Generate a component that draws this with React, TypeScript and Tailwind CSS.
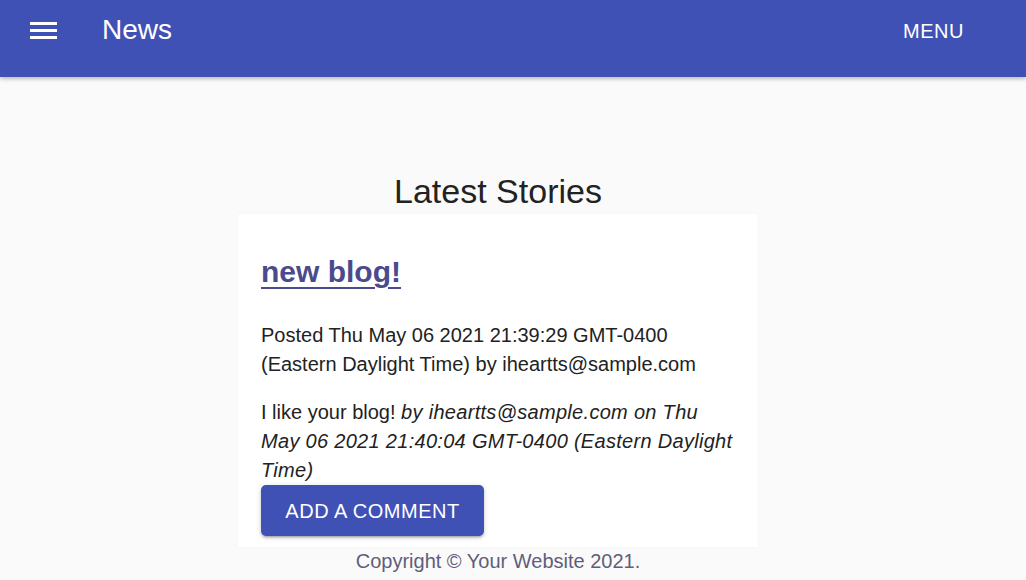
export default function App() {
  return (
    <div className="min-h-[580px] bg-[#fafafa] font-['Liberation_Sans',Arial,sans-serif] text-[#222]">
      {/* app bar */}
      <header className="relative z-10 flex h-[77px] items-start bg-[#3f51b5] pl-[30px] pr-[62px] text-white shadow-[0_2px_4px_rgba(0,0,0,0.25)]">
        <svg className="mt-[22px]" width="27" height="17" viewBox="0 0 27 17" fill="white">
          <rect x="0" y="0" width="27" height="3" />
          <rect x="0" y="7" width="27" height="3" />
          <rect x="0" y="14" width="27" height="3" />
        </svg>
        <h1 className="ml-[45px] mt-[14px] text-[28px] leading-[32px]">News</h1>
        <button className="ml-auto mt-[19px] text-[20px] leading-[24px] tracking-[0.5px]">MENU</button>
      </header>

      <main className="flex flex-col items-center pr-[30px]">
        <h2 className="mt-[94px] text-[34px] leading-[40px]">Latest Stories</h2>

        <div className="mt-[3px] w-[520px] bg-white pb-[11px] pl-[23px] pr-[21px] pt-[40px] shadow-[0_0_1px_rgba(0,0,0,0.08)]">
          <a
            href="#"
            className="block text-[30px] font-bold leading-[36px] text-[#4b4a8c] underline decoration-2 underline-offset-[5px]"
          >
            new blog!
          </a>
          <p className="mt-[31px] pr-[2px] text-[20px] leading-[29px]">
            Posted Thu May 06 2021 21:39:29 GMT-0400 (Eastern Daylight Time) by iheartts@sample.com
          </p>
          <p className="mt-[19px] text-[20px] leading-[29px]">
            I like your blog!{" "}
            <em className="tracking-[0.3px]">
              by iheartts@sample.com on Thu May 06 2021 21:40:04 GMT-0400 (Eastern Daylight Time)
            </em>
          </p>
          <button className="h-[51px] w-[223px] rounded-[5px] bg-[#3f51b5] text-[20px] tracking-[0.5px] text-white shadow-[0_3px_2px_-2px_rgba(0,0,0,0.2),0_2px_3px_0_rgba(0,0,0,0.14),0_1px_6px_0_rgba(0,0,0,0.12)]">
            ADD A COMMENT
          </button>
        </div>

        <p className="text-[20px] leading-[29px] text-[#5f5e7a]">Copyright © Your Website 2021.</p>
      </main>
    </div>
  )
}
